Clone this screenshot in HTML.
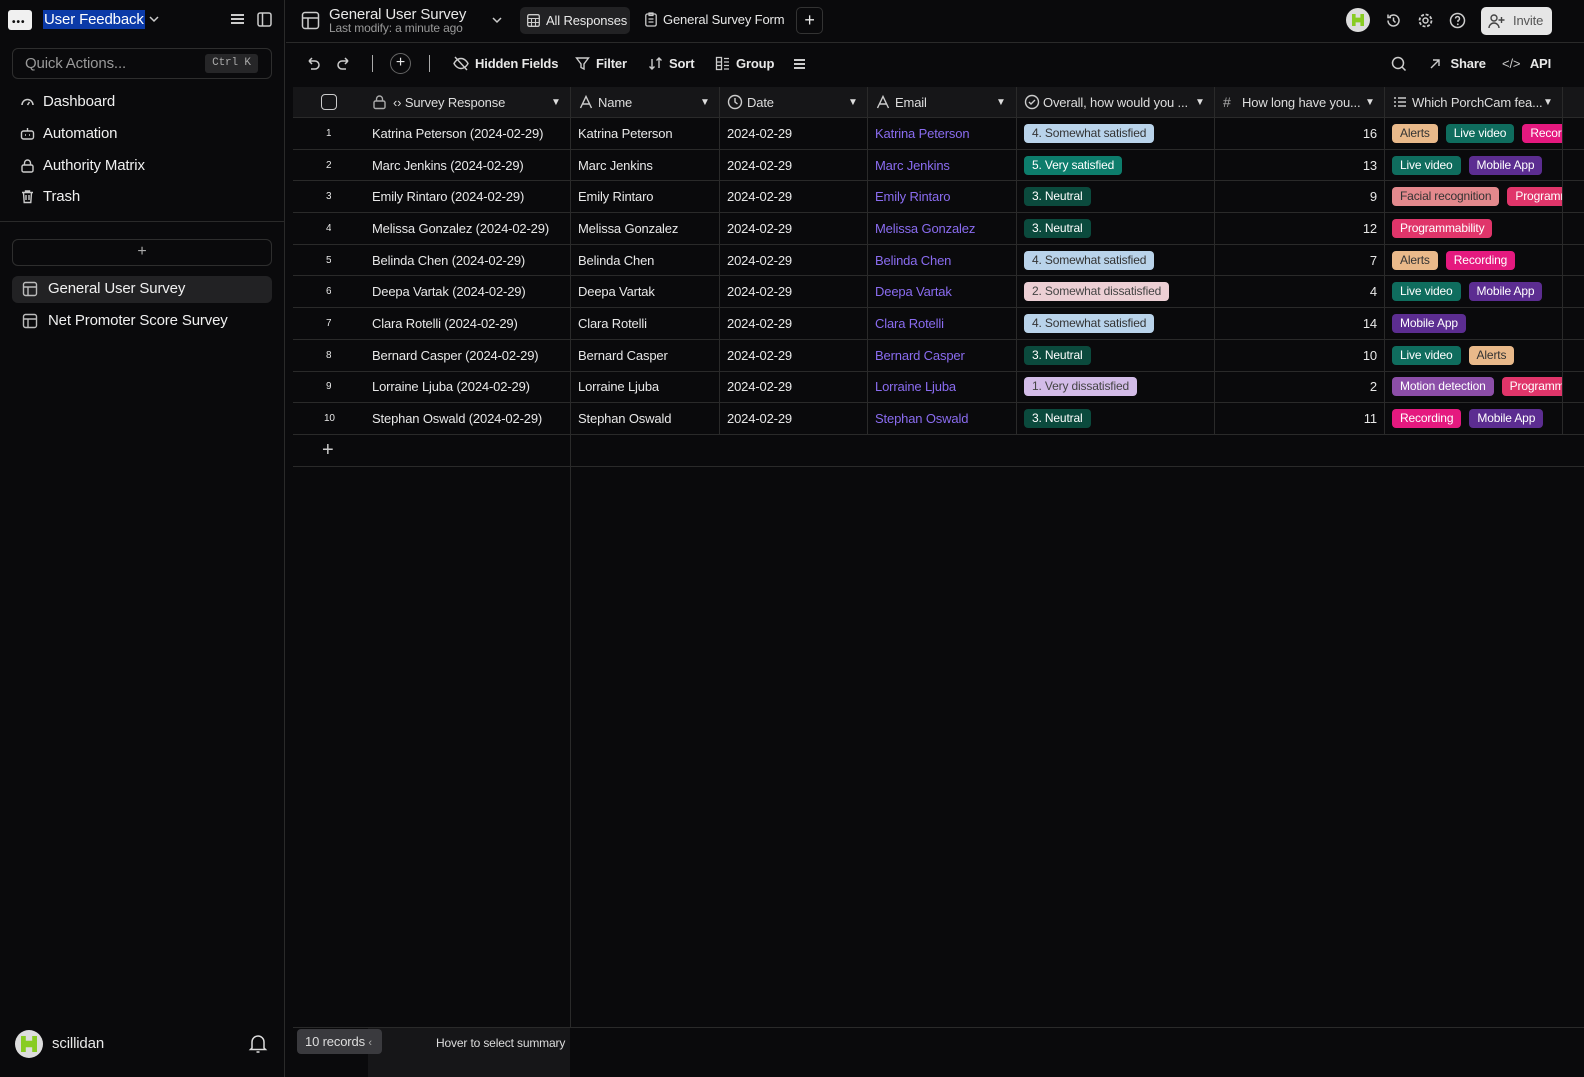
<!DOCTYPE html>
<html><head><meta charset="utf-8">
<style>
*{box-sizing:border-box;margin:0;padding:0}
body{width:1584px;height:1077px;background:#0a0a0c;color:#e8e8e8;font-family:"Liberation Sans",sans-serif;font-size:13px;position:relative;overflow:hidden;letter-spacing:-0.15px}
.a{position:absolute}
svg{display:block}
.side{left:0;top:0;width:285px;height:1077px;border-right:1px solid #2a2a2a;background:#0a0a0c}
.nav{left:20px;font-size:15px;color:#f0f0f0;display:flex;align-items:center;gap:8px}
.hdr{top:87px;height:31px;background:#161618;border-bottom:1px solid #2a2a2a;font-size:13px;display:flex;align-items:center}
.row{position:absolute;left:293px;width:1291px;border-bottom:1px solid #2a2a2a;height:31.7px}
.c{position:absolute;top:0;height:100%;display:flex;align-items:center;font-size:13px;white-space:nowrap;overflow:hidden}
.vl{position:absolute;top:87px;width:1px;background:#2a2a2a}
.t{display:inline-block;padding:2px 8px;border-radius:4px;font-size:12px;line-height:15px;margin-right:8px}
.ss{background:#b9d3ea;color:#333}.vs{background:#0d7d6c;color:#fff}.ne{background:#0b4a3d;color:#fff}.sd{background:#eccfd4;color:#444}.vd{background:#d3bce8;color:#444}
.al{background:#e9b98a;color:#333}.lv{background:#0f6d5e;color:#fff}.rc{background:#e5197f;color:#fff}.ma{background:#5c2d91;color:#fff}.fr{background:#e3898d;color:#333}.pr{background:#e0356a;color:#fff}.md{background:#8c4ea8;color:#fff}
.tb{display:flex;align-items:center;gap:6px;font-size:13px;font-weight:bold;color:#e8e8e8}
</style></head><body>
<div class="a side"></div>
<svg width="0" height="0" style="position:absolute"><defs><symbol id="tbl" viewBox="0 0 16 16"><rect x="1.5" y="1.5" width="13" height="13" rx="2" fill="none" stroke="#bbb" stroke-width="1.4"/><path d="M1.5 6h13M6 6v8.5" stroke="#bbb" stroke-width="1.4"/></symbol></defs></svg>
<div class="a" style="left:8px;top:10px;width:24px;height:20px;background:#f0f0f0;border-radius:3px"></div>
<div class="a" style="left:12px;top:17px;font-size:10px;color:#111;font-weight:bold;letter-spacing:1px">•••</div>
<div class="a" style="left:43px;top:10px;font-size:15px;background:#0b3aa8;color:#fff;padding:0 1px;line-height:19px">User Feedback</div>
<svg class="a" style="left:148px;top:15px" width="12" height="8"><path d="M2 2l4 4 4-4" stroke="#ccc" stroke-width="1.5" fill="none"/></svg>
<div class="a" style="left:231px;top:14px;width:13px;height:1.5px;background:#ccc;box-shadow:0 4px #ccc,0 8px #ccc"></div>
<svg class="a" style="left:257px;top:12px" width="16" height="16"><rect x="1" y="1" width="13" height="13" rx="2" fill="none" stroke="#ccc" stroke-width="1.5"/><path d="M5.5 1v13" stroke="#ccc" stroke-width="1.5"/></svg>
<div class="a" style="left:12px;top:48px;width:260px;height:31px;border:1px solid #2e2e2e;border-radius:6px"></div>
<div class="a" style="left:25px;top:55px;font-size:15px;color:#999">Quick Actions...</div>
<div class="a" style="left:205px;top:54px;width:53px;height:19px;background:#262628;border-radius:3px;font-family:'Liberation Mono',monospace;font-size:11px;color:#aaa;text-align:center;line-height:19px">Ctrl K</div>
<div class="a nav" style="top:93px"><svg width="15" height="15"><path d="M2 11a5.5 5.5 0 0 1 11 0" fill="none" stroke="#ccc" stroke-width="1.5"/><path d="M7.5 11l2-3" stroke="#ccc" stroke-width="1.5"/></svg>Dashboard</div>
<div class="a nav" style="top:125px"><svg width="15" height="15"><rect x="1.5" y="5" width="12" height="8" rx="2" fill="none" stroke="#ccc" stroke-width="1.4"/><path d="M7.5 2v3M5 9h1M9 9h1" stroke="#ccc" stroke-width="1.4"/></svg>Automation</div>
<div class="a nav" style="top:157px"><svg width="15" height="15"><rect x="2" y="7" width="11" height="7" rx="1.5" fill="none" stroke="#ccc" stroke-width="1.4"/><path d="M4.5 7V5a3 3 0 0 1 6 0v2" fill="none" stroke="#ccc" stroke-width="1.4"/></svg>Authority Matrix</div>
<div class="a nav" style="top:188px"><svg width="15" height="15"><path d="M2 3.5h11M5.5 3.5V2h4v1.5M3.5 3.5l.7 10h6.6l.7-10M6 6v5M9 6v5" fill="none" stroke="#ccc" stroke-width="1.4"/></svg>Trash</div>
<div class="a" style="left:0;top:221px;width:285px;height:1px;background:#2a2a2a"></div>
<div class="a" style="left:12px;top:239px;width:260px;height:27px;border:1px solid #2e2e2e;border-radius:6px;text-align:center;color:#aaa;font-size:16px;line-height:24px">+</div>
<div class="a" style="left:12px;top:276px;width:260px;height:27px;background:#222224;border-radius:6px"></div>
<div class="a nav" style="top:280px;left:22px;gap:10px"><svg width="16" height="16"><use href="#tbl"/></svg>General User Survey</div>
<div class="a nav" style="top:312px;left:22px;gap:10px"><svg width="16" height="16"><use href="#tbl"/></svg>Net Promoter Score Survey</div>
<div class="a" style="left:15px;top:1030px;width:28px;height:28px;border-radius:50%;background:#ddd"></div>
<div class="a" style="left:21px;top:1036px;width:16px;height:16px;background:#8c2;clip-path:polygon(0 0,30% 0,30% 30%,70% 30%,70% 0,100% 0,100% 100%,70% 100%,70% 70%,30% 70%,30% 100%,0 100%)"></div>
<div class="a" style="left:52px;top:1035px;font-size:15px">scillidan</div>
<svg class="a" style="left:248px;top:1033px" width="20" height="22"><path d="M4 15V9a6 6 0 0 1 12 0v6l1.5 1.5h-15z" fill="none" stroke="#ddd" stroke-width="1.5"/><path d="M8.5 19h3" stroke="#ddd" stroke-width="1.5"/></svg>

<div class="a" style="left:286px;top:42px;width:1298px;height:1px;background:#2a2a2a"></div>
<svg class="a" style="left:301px;top:11px" width="20" height="20"><rect x="1.5" y="1.5" width="16" height="16" rx="2.5" fill="none" stroke="#ccc" stroke-width="1.5"/><path d="M1.5 7h16M7 7v10.5" stroke="#ccc" stroke-width="1.5"/></svg>
<div class="a" style="left:329px;top:6px;font-size:15px">General User Survey</div>
<div class="a" style="left:329px;top:21px;font-size:12px;color:#999">Last modify: a minute ago</div>
<svg class="a" style="left:491px;top:16px" width="12" height="8"><path d="M2 2l4 4 4-4" stroke="#ccc" stroke-width="1.5" fill="none"/></svg>
<div class="a" style="left:520px;top:7px;width:110px;height:27px;background:#222224;border-radius:5px"></div>
<div class="a tb" style="left:527px;top:13px;font-weight:normal"><svg width="13" height="13"><rect x=".7" y=".7" width="11.6" height="11.6" rx="1.5" fill="none" stroke="#ccc" stroke-width="1.3"/><path d="M1 4.5h11M1 8.5h11M4.5 4.5v8M8.5 4.5v8" stroke="#ccc" stroke-width="1.1"/></svg>All Responses</div>
<div class="a tb" style="left:645px;top:12px;font-weight:normal"><svg width="12" height="15"><rect x=".8" y="2" width="10.4" height="12" rx="1.5" fill="none" stroke="#ccc" stroke-width="1.3"/><path d="M4 1h4v2.5H4zM3.5 7h5M3.5 10h5" stroke="#ccc" stroke-width="1.2" fill="none"/></svg>General Survey Form</div>
<div class="a" style="left:796px;top:7px;width:27px;height:27px;border:1px solid #333;border-radius:5px;text-align:center;line-height:24px;font-size:18px">+</div>
<div class="a" style="left:1346px;top:8px;width:24px;height:24px;border-radius:50%;background:#ddd"></div>
<div class="a" style="left:1352px;top:14px;width:12px;height:12px;background:#8c2;clip-path:polygon(0 0,30% 0,30% 30%,70% 30%,70% 0,100% 0,100% 100%,70% 100%,70% 70%,30% 70%,30% 100%,0 100%)"></div>
<svg class="a" style="left:1385px;top:12px" width="17" height="17"><path d="M3 8.5a5.5 5.5 0 1 0 1.6-3.9M3 2.5v3h3M8.5 5.5v3l2 2" fill="none" stroke="#ccc" stroke-width="1.5"/></svg>
<svg class="a" style="left:1417px;top:12px" width="17" height="17"><circle cx="8.5" cy="8.5" r="2.5" fill="none" stroke="#ccc" stroke-width="1.5"/><circle cx="8.5" cy="8.5" r="6" fill="none" stroke="#ccc" stroke-width="1.8" stroke-dasharray="3 1.7"/></svg>
<svg class="a" style="left:1449px;top:12px" width="17" height="17"><circle cx="8.5" cy="8.5" r="7" fill="none" stroke="#ccc" stroke-width="1.5"/><path d="M6.5 6.5a2 2 0 1 1 2.5 2v1.5" fill="none" stroke="#ccc" stroke-width="1.4"/><circle cx="8.8" cy="12.3" r=".9" fill="#ccc"/></svg>
<div class="a" style="left:1481px;top:7px;width:71px;height:28px;background:#e6e6e6;border-radius:5px;color:#555;font-size:13px;line-height:28px;padding-left:32px">Invite</div>
<svg class="a" style="left:1488px;top:13px" width="17" height="16"><circle cx="6" cy="5" r="3" fill="none" stroke="#444" stroke-width="1.4"/><path d="M1 15a5 5 0 0 1 10 0M13.5 4v6M10.5 7h6" fill="none" stroke="#444" stroke-width="1.4"/></svg>

<svg class="a" style="left:305px;top:56px" width="16" height="16"><path d="M4 5h6a4 4 0 0 1 0 8H6M4 5l3-3M4 5l3 3" fill="none" stroke="#ccc" stroke-width="1.5"/></svg>
<svg class="a" style="left:336px;top:56px" width="16" height="16"><path d="M12 5H6a4 4 0 0 0 0 8h4M12 5L9 2M12 5L9 8" fill="none" stroke="#ccc" stroke-width="1.5"/></svg>
<div class="a" style="left:372px;top:55px;width:1px;height:17px;background:#aaa"></div>
<div class="a" style="left:390px;top:53px;width:21px;height:21px;border:1px solid #666;border-radius:50%;text-align:center;line-height:18px;font-size:16px">+</div>
<div class="a" style="left:429px;top:55px;width:1px;height:17px;background:#aaa"></div>
<div class="a tb" style="left:453px;top:56px"><svg width="16" height="15"><path d="M1 7.5s2.5-5 7-5 7 5 7 5-2.5 5-7 5-7-5-7-5zM2 1l12 13" fill="none" stroke="#ccc" stroke-width="1.4"/></svg>Hidden Fields</div>
<div class="a tb" style="left:575px;top:56px"><svg width="15" height="15"><path d="M1.5 2h12l-4.5 6v5l-3-1.5V8z" fill="none" stroke="#ccc" stroke-width="1.4"/></svg>Filter</div>
<div class="a tb" style="left:648px;top:56px"><svg width="15" height="15"><path d="M4 3v10M1.5 10.5L4 13l2.5-2.5M11 12V2M8.5 4.5L11 2l2.5 2.5" fill="none" stroke="#ccc" stroke-width="1.4"/></svg>Sort</div>
<div class="a tb" style="left:715px;top:56px"><svg width="15" height="15"><rect x="1.5" y="1.5" width="5" height="12" fill="none" stroke="#ccc" stroke-width="1.3"/><path d="M9 2.5h5M9 6h5M9 9.5h5M9 13h5M1.5 6h5M1.5 9.5h5" stroke="#ccc" stroke-width="1.3"/></svg>Group</div>
<div class="a" style="left:794px;top:59px;width:11px;height:1.5px;background:#ccc;box-shadow:0 4px #ccc,0 8px #ccc"></div>
<svg class="a" style="left:1391px;top:56px" width="16" height="16"><circle cx="7" cy="7" r="5.5" fill="none" stroke="#ccc" stroke-width="1.5"/><path d="M11 11l3.5 3.5" stroke="#ccc" stroke-width="1.5"/></svg>
<div class="a tb" style="left:1429px;top:56px"><svg width="12" height="12"><path d="M2 10l8-8M4 2h6v6" fill="none" stroke="#ccc" stroke-width="1.4"/></svg>&nbsp;Share</div>
<div class="a tb" style="left:1502px;top:56px"><span style="color:#ccc;font-weight:normal">&lt;/&gt;</span>&nbsp;API</div>

<div class="a hdr" style="left:293px;width:1291px"></div>
<div class="a" style="left:321px;top:94px;width:16px;height:16px;border:1.5px solid #ccc;border-radius:4px"></div>
<svg class="a" style="left:372px;top:94px" width="15" height="16"><rect x="2" y="7" width="11" height="7.5" rx="1.5" fill="none" stroke="#aaa" stroke-width="1.4"/><path d="M4.5 7V5a3 3 0 0 1 6 0v2" fill="none" stroke="#aaa" stroke-width="1.4"/></svg>
<div class="a" style="left:393px;top:95px;color:#ddd">‹› Survey Response</div>
<svg class="a" style="left:579px;top:95px" width="14" height="14"><path d="M1.5 13L7 1.5 12.5 13M3.5 9h7" fill="none" stroke="#ccc" stroke-width="1.4"/></svg>
<div class="a" style="left:598px;top:95px;color:#ddd">Name</div>
<svg class="a" style="left:727px;top:94px" width="16" height="16"><circle cx="8" cy="8" r="6.5" fill="none" stroke="#ccc" stroke-width="1.4"/><path d="M8 4v4l2.5 2" fill="none" stroke="#ccc" stroke-width="1.4"/></svg>
<div class="a" style="left:747px;top:95px;color:#ddd">Date</div>
<svg class="a" style="left:876px;top:95px" width="14" height="14"><path d="M1.5 13L7 1.5 12.5 13M3.5 9h7" fill="none" stroke="#ccc" stroke-width="1.4"/></svg>
<div class="a" style="left:895px;top:95px;color:#ddd">Email</div>
<svg class="a" style="left:1024px;top:94px" width="16" height="16"><circle cx="8" cy="8" r="6.5" fill="none" stroke="#ccc" stroke-width="1.4"/><path d="M5 8l2 2 4-4" fill="none" stroke="#ccc" stroke-width="1.4"/></svg>
<div class="a" style="left:1043px;top:95px;color:#ddd">Overall, how would you ...</div>
<div class="a" style="left:1223px;top:94px;color:#aaa;font-size:14px">#</div>
<div class="a" style="left:1242px;top:95px;color:#ddd">How long have you...</div>
<svg class="a" style="left:1393px;top:96px" width="14" height="12"><path d="M1 2h2M1 6h2M1 10h2M5 2h8M5 6h8M5 10h8" stroke="#ccc" stroke-width="1.4"/></svg>
<div class="a" style="left:1412px;top:95px;color:#ddd">Which PorchCam fea...</div>
<div class="a" style="left:551px;top:97px;font-size:10px;color:#ddd">▼</div>
<div class="a" style="left:700px;top:97px;font-size:10px;color:#ddd">▼</div>
<div class="a" style="left:848px;top:97px;font-size:10px;color:#ddd">▼</div>
<div class="a" style="left:996px;top:97px;font-size:10px;color:#ddd">▼</div>
<div class="a" style="left:1195px;top:97px;font-size:10px;color:#ddd">▼</div>
<div class="a" style="left:1365px;top:97px;font-size:10px;color:#ddd">▼</div>
<div class="a" style="left:1543px;top:97px;font-size:10px;color:#ddd">▼</div>

<div class="row" style="top:118px"><div class="c" style="left:33px;font-size:10px">1</div><div class="c" style="left:79px">Katrina Peterson (2024-02-29)</div><div class="c" style="left:285px">Katrina Peterson</div><div class="c" style="left:434px">2024-02-29</div><div class="c" style="left:582px;color:#8a6cf0">Katrina Peterson</div><div class="c" style="left:731px"><span class="t ss">4. Somewhat satisfied</span></div><div class="c" style="left:921px;width:163px;justify-content:flex-end">16</div><div class="c" style="left:1099px;width:170px"><span class="t al">Alerts</span><span class="t lv">Live video</span><span class="t rc">Recording</span></div></div>
<div class="row" style="top:149.7px"><div class="c" style="left:33px;font-size:10px">2</div><div class="c" style="left:79px">Marc Jenkins (2024-02-29)</div><div class="c" style="left:285px">Marc Jenkins</div><div class="c" style="left:434px">2024-02-29</div><div class="c" style="left:582px;color:#8a6cf0">Marc Jenkins</div><div class="c" style="left:731px"><span class="t vs">5. Very satisfied</span></div><div class="c" style="left:921px;width:163px;justify-content:flex-end">13</div><div class="c" style="left:1099px;width:170px"><span class="t lv">Live video</span><span class="t ma">Mobile App</span></div></div>
<div class="row" style="top:181.4px"><div class="c" style="left:33px;font-size:10px">3</div><div class="c" style="left:79px">Emily Rintaro (2024-02-29)</div><div class="c" style="left:285px">Emily Rintaro</div><div class="c" style="left:434px">2024-02-29</div><div class="c" style="left:582px;color:#8a6cf0">Emily Rintaro</div><div class="c" style="left:731px"><span class="t ne">3. Neutral</span></div><div class="c" style="left:921px;width:163px;justify-content:flex-end">9</div><div class="c" style="left:1099px;width:170px"><span class="t fr">Facial recognition</span><span class="t pr">Programmability</span></div></div>
<div class="row" style="top:213.1px"><div class="c" style="left:33px;font-size:10px">4</div><div class="c" style="left:79px">Melissa Gonzalez (2024-02-29)</div><div class="c" style="left:285px">Melissa Gonzalez</div><div class="c" style="left:434px">2024-02-29</div><div class="c" style="left:582px;color:#8a6cf0">Melissa Gonzalez</div><div class="c" style="left:731px"><span class="t ne">3. Neutral</span></div><div class="c" style="left:921px;width:163px;justify-content:flex-end">12</div><div class="c" style="left:1099px;width:170px"><span class="t pr">Programmability</span></div></div>
<div class="row" style="top:244.8px"><div class="c" style="left:33px;font-size:10px">5</div><div class="c" style="left:79px">Belinda Chen (2024-02-29)</div><div class="c" style="left:285px">Belinda Chen</div><div class="c" style="left:434px">2024-02-29</div><div class="c" style="left:582px;color:#8a6cf0">Belinda Chen</div><div class="c" style="left:731px"><span class="t ss">4. Somewhat satisfied</span></div><div class="c" style="left:921px;width:163px;justify-content:flex-end">7</div><div class="c" style="left:1099px;width:170px"><span class="t al">Alerts</span><span class="t rc">Recording</span></div></div>
<div class="row" style="top:276.5px"><div class="c" style="left:33px;font-size:10px">6</div><div class="c" style="left:79px">Deepa Vartak (2024-02-29)</div><div class="c" style="left:285px">Deepa Vartak</div><div class="c" style="left:434px">2024-02-29</div><div class="c" style="left:582px;color:#8a6cf0">Deepa Vartak</div><div class="c" style="left:731px"><span class="t sd">2. Somewhat dissatisfied</span></div><div class="c" style="left:921px;width:163px;justify-content:flex-end">4</div><div class="c" style="left:1099px;width:170px"><span class="t lv">Live video</span><span class="t ma">Mobile App</span></div></div>
<div class="row" style="top:308.2px"><div class="c" style="left:33px;font-size:10px">7</div><div class="c" style="left:79px">Clara Rotelli (2024-02-29)</div><div class="c" style="left:285px">Clara Rotelli</div><div class="c" style="left:434px">2024-02-29</div><div class="c" style="left:582px;color:#8a6cf0">Clara Rotelli</div><div class="c" style="left:731px"><span class="t ss">4. Somewhat satisfied</span></div><div class="c" style="left:921px;width:163px;justify-content:flex-end">14</div><div class="c" style="left:1099px;width:170px"><span class="t ma">Mobile App</span></div></div>
<div class="row" style="top:339.9px"><div class="c" style="left:33px;font-size:10px">8</div><div class="c" style="left:79px">Bernard Casper (2024-02-29)</div><div class="c" style="left:285px">Bernard Casper</div><div class="c" style="left:434px">2024-02-29</div><div class="c" style="left:582px;color:#8a6cf0">Bernard Casper</div><div class="c" style="left:731px"><span class="t ne">3. Neutral</span></div><div class="c" style="left:921px;width:163px;justify-content:flex-end">10</div><div class="c" style="left:1099px;width:170px"><span class="t lv">Live video</span><span class="t al">Alerts</span></div></div>
<div class="row" style="top:371.6px"><div class="c" style="left:33px;font-size:10px">9</div><div class="c" style="left:79px">Lorraine Ljuba (2024-02-29)</div><div class="c" style="left:285px">Lorraine Ljuba</div><div class="c" style="left:434px">2024-02-29</div><div class="c" style="left:582px;color:#8a6cf0">Lorraine Ljuba</div><div class="c" style="left:731px"><span class="t vd">1. Very dissatisfied</span></div><div class="c" style="left:921px;width:163px;justify-content:flex-end">2</div><div class="c" style="left:1099px;width:170px"><span class="t md">Motion detection</span><span class="t pr">Programmability</span></div></div>
<div class="row" style="top:403.3px"><div class="c" style="left:31px;font-size:10px">10</div><div class="c" style="left:79px">Stephan Oswald (2024-02-29)</div><div class="c" style="left:285px">Stephan Oswald</div><div class="c" style="left:434px">2024-02-29</div><div class="c" style="left:582px;color:#8a6cf0">Stephan Oswald</div><div class="c" style="left:731px"><span class="t ne">3. Neutral</span></div><div class="c" style="left:921px;width:163px;justify-content:flex-end">11</div><div class="c" style="left:1099px;width:170px"><span class="t rc">Recording</span><span class="t ma">Mobile App</span></div></div>
<div class="row" style="top:435px"><div class="c" style="left:29px;font-size:20px;color:#ccc">+</div></div>

<div class="vl" style="left:570px;height:940px"></div>
<div class="vl" style="left:719px;height:348px"></div>
<div class="vl" style="left:867px;height:348px"></div>
<div class="vl" style="left:1016px;height:348px"></div>
<div class="vl" style="left:1214px;height:348px"></div>
<div class="vl" style="left:1384px;height:348px"></div>
<div class="vl" style="left:1562px;height:348px"></div>

<div class="a" style="left:293px;top:1027px;width:1291px;height:1px;background:#2a2a2a"></div>
<div class="a" style="left:368px;top:1028px;width:202px;height:49px;background:#161618"></div>
<div class="a" style="left:297px;top:1029px;width:85px;height:25px;background:#3a3a3e;border-radius:4px;font-size:13px;line-height:25px;padding-left:8px;color:#ddd">10 records <span style="font-size:11px;color:#aaa">‹</span></div>
<div class="a" style="left:436px;top:1036px;font-size:12px;color:#ddd">Hover to select summary</div>
</body></html>
